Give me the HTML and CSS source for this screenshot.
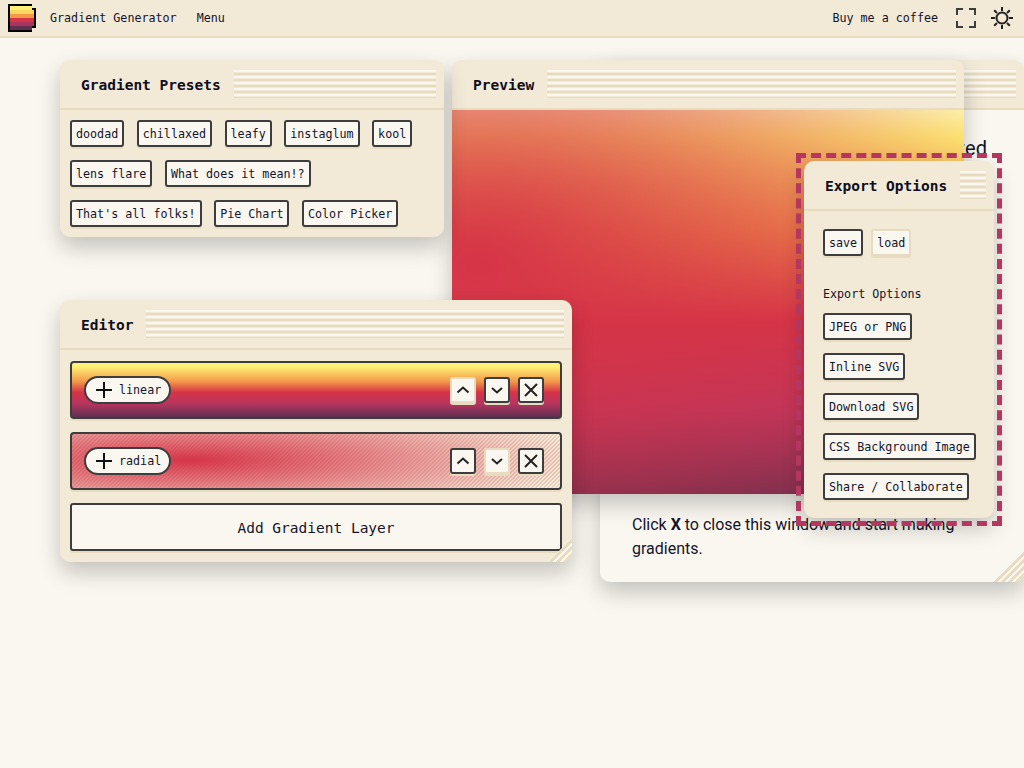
FILE: index.html
```html
<!DOCTYPE html>
<html lang="en">
<head>
    <meta charset="UTF-8">
    <meta name="viewport" content="width=device-width, initial-scale=1.0">
    <title>Gradient Generator</title>
    <link rel="stylesheet" href="styles.css">
</head>
<body>
    <!-- Top Bar -->
    <header class="topbar">
        <svg class="logo" width="28" height="28" viewBox="0 0 28 28" shape-rendering="crispEdges">
            <polygon fill="#000" points="0,0 24,0 24,4 28,4 28,24 24,24 24,28 0,28"/>
            <rect x="2" y="2" width="22" height="4" fill="#fff07a"/>
            <rect x="2" y="6" width="24" height="4" fill="#fad660"/>
            <rect x="2" y="10" width="24" height="4" fill="#f2994a"/>
            <rect x="2" y="14" width="24" height="4" fill="#d63447"/>
            <rect x="2" y="18" width="24" height="4" fill="#a8345f"/>
            <rect x="2" y="22" width="22" height="4" fill="#5e3050"/>
        </svg>
        <span class="brand">Gradient Generator</span>
        <span class="menu">Menu</span>
        <span class="coffee">Buy me a coffee</span>
        <svg class="icon-full" width="20" height="20" viewBox="0 0 20 20" fill="none" stroke="#3d3d3d" stroke-width="2">
            <path d="M1 7V1H7M13 1H19V7M19 13V19H13M7 19H1V13"/>
        </svg>
        <svg class="icon-sun" width="24" height="24" viewBox="0 0 24 24" fill="none" stroke="#222" stroke-width="2">
            <circle cx="12" cy="12" r="5.5"/>
            <path d="M12 1V5M12 19V23M1 12H5M19 12H23M4.2 4.2L7 7M17 17L19.8 19.8M4.2 19.8L7 17M17 7L19.8 4.2"/>
        </svg>
    </header>

    <!-- Welcome Window -->
    <section class="window welcome">
        <div class="titlebar">
            <h2>Welcome</h2>
            <div class="stripes"></div>
        </div>
        <div class="welcome-body">
            <p class="welcome-lead">Now let's get your gradients started</p>
            <p>Click <strong>X</strong> to close this window and start making gradients.</p>
        </div>
        <div class="resize resize-large"></div>
    </section>

    <!-- Preview Window -->
    <section class="window preview">
        <div class="titlebar">
            <h2>Preview</h2>
            <div class="stripes"></div>
        </div>
        <div class="preview-image"></div>
    </section>

    <!-- Presets Window -->
    <section class="window presets">
        <div class="titlebar">
            <h2>Gradient Presets</h2>
            <div class="stripes"></div>
        </div>
        <div class="preset-list">
            <button class="btn">doodad</button>
            <button class="btn">chillaxed</button>
            <button class="btn">leafy</button>
            <button class="btn">instaglum</button>
            <button class="btn">kool</button>
            <button class="btn">lens flare</button>
            <button class="btn">What does it mean!?</button>
            <button class="btn">That's all folks!</button>
            <button class="btn">Pie Chart</button>
            <button class="btn">Color Picker</button>
        </div>
    </section>

    <!-- Editor Window -->
    <section class="window editor">
        <div class="titlebar">
            <h2>Editor</h2>
            <div class="stripes"></div>
        </div>
        <div class="layers">
            <div class="layer layer-linear">
                <button class="pill">
                    <svg width="18" height="18" viewBox="0 0 18 18" stroke="#111" stroke-width="2"><path d="M9 1V17M1 9H17"/></svg>
                    linear
                </button>
                <div class="layer-actions">
                    <button class="square active">
                        <svg width="14" height="14" viewBox="0 0 14 14" fill="none" stroke="#222" stroke-width="2"><path d="M1.5 9.5L7 4.5L12.5 9.5"/></svg>
                    </button>
                    <button class="square">
                        <svg width="14" height="14" viewBox="0 0 14 14" fill="none" stroke="#222" stroke-width="2"><path d="M2 5L7 9.5L12 5"/></svg>
                    </button>
                    <button class="square">
                        <svg width="16" height="16" viewBox="0 0 16 16" fill="none" stroke="#222" stroke-width="2"><path d="M2 2L14 14M14 2L2 14"/></svg>
                    </button>
                </div>
            </div>
            <div class="layer layer-radial">
                <button class="pill">
                    <svg width="18" height="18" viewBox="0 0 18 18" stroke="#111" stroke-width="2"><path d="M9 1V17M1 9H17"/></svg>
                    radial
                </button>
                <div class="layer-actions">
                    <button class="square">
                        <svg width="14" height="14" viewBox="0 0 14 14" fill="none" stroke="#222" stroke-width="2"><path d="M1.5 9.5L7 4.5L12.5 9.5"/></svg>
                    </button>
                    <button class="square active">
                        <svg width="14" height="14" viewBox="0 0 14 14" fill="none" stroke="#222" stroke-width="2"><path d="M2 5L7 9.5L12 5"/></svg>
                    </button>
                    <button class="square">
                        <svg width="16" height="16" viewBox="0 0 16 16" fill="none" stroke="#222" stroke-width="2"><path d="M2 2L14 14M14 2L2 14"/></svg>
                    </button>
                </div>
            </div>
            <button class="add-layer">Add Gradient Layer</button>
        </div>
        <div class="resize"></div>
    </section>

    <!-- Export Window -->
    <section class="window export">
        <div class="titlebar">
            <h2>Export Options</h2>
            <div class="stripes"></div>
        </div>
        <div class="export-body">
            <div class="save-row">
                <button class="btn">save</button>
                <button class="btn active">load</button>
            </div>
            <div class="export-label">Export Options</div>
            <button class="btn">JPEG or PNG</button>
            <button class="btn">Inline SVG</button>
            <button class="btn">Download SVG</button>
            <button class="btn">CSS Background Image</button>
            <button class="btn">Share / Collaborate</button>
        </div>
    </section>
</body>
</html>
```

FILE: styles.css
```css
/* General Reset */
* {
    margin: 0;
    padding: 0;
    box-sizing: border-box;
}

body {
    font-family: "DejaVu Sans Mono", monospace;
    background-color: #faf7f0;
    color: #14142b;
    height: 768px;
    overflow: hidden;
    position: relative;
}

/* Top Bar */
.topbar {
    display: flex;
    align-items: center;
    height: 38px;
    padding: 0 10px 0 8px;
    background-color: #f2e9d7;
    border-bottom: 2px solid #e8dcc0;
    font-size: 11.7px;
}

.logo {
    margin-right: 14px;
}

.brand {
    margin-right: 20px;
}

.coffee {
    margin-left: auto;
    margin-right: 18px;
}

.icon-full {
    margin-right: 14px;
}

/* Windows */
.window {
    position: absolute;
    background-color: #f2e9d7;
    border-radius: 10px;
    box-shadow: 0 10px 22px rgba(0, 0, 0, 0.22);
}

.titlebar {
    display: flex;
    align-items: center;
    height: 50px;
    padding: 2px 8px 0 21px;
    border-bottom: 2px solid #e8dcc0;
}

h2 {
    font-size: 14.5px;
    font-weight: bold;
    white-space: nowrap;
    margin-right: 13px;
    color: #0e0e20;
}

.stripes {
    flex: 1;
    height: 28px;
    margin-bottom: 2px;
    background: repeating-linear-gradient(to bottom, #faf7f0 0, #faf7f0 2px, #f2e9d7 2px, #f2e9d7 3px, #e8dcc0 3px, #e8dcc0 5px, #f2e9d7 5px, #f2e9d7 6px);
}

.welcome {
    left: 600px;
    top: 60px;
    width: 424px;
    height: 522px;
    background-color: #faf7f0;
}

.welcome .titlebar {
    background-color: #f2e9d7;
    border-radius: 10px 10px 0 0;
}

.welcome-body {
    display: flex;
    flex-direction: column;
    justify-content: space-between;
    height: 472px;
    padding: 24px 32px 21px;
    font-family: Roboto, sans-serif;
    font-size: 16px;
    line-height: 24px;
}

.welcome-lead {
    font-size: 20px;
    line-height: 28px;
    text-align: right;
    margin-right: 5px;
}

.preview {
    left: 452px;
    top: 60px;
    width: 512px;
    height: 434px;
}

.preview-image {
    height: 384px;
    background:
        radial-gradient(ellipse 640px 420px at 5% 40%, #d63447 0, rgba(214, 52, 71, 0) 90%),
        linear-gradient(to bottom, #fffbb0 0, #fff275 7%, #f2994a 32%, #d63447 55%, #b83560 78%, #6f2f50 100%);
}

.presets {
    left: 60px;
    top: 60px;
    width: 384px;
    height: 177px;
}

.preset-list {
    display: flex;
    flex-wrap: wrap;
    gap: 13px 12.5px;
    padding: 10px;
}

.editor {
    left: 60px;
    top: 300px;
    width: 512px;
    height: 262px;
}

.layers {
    display: flex;
    flex-direction: column;
    padding: 11px 10px 0;
}

.layer {
    display: flex;
    align-items: center;
    justify-content: space-between;
    height: 58px;
    padding: 0 16px 0 12px;
    border: 2px solid #3d3d3d;
    border-radius: 4px;
    box-shadow: 0 2px 0 #e8dcc0;
    margin-bottom: 13px;
}

.layer-linear {
    background: linear-gradient(to bottom, #fff275 0, #fff275 6%, #f2994a 34%, #d63447 54%, #b83560 75%, #5e3050 100%);
}

.layer-radial {
    background:
        radial-gradient(ellipse 420px 60px at 24% 48%, #d63447 0, rgba(214, 52, 71, 0.55) 45%, rgba(214, 52, 71, 0) 100%),
        linear-gradient(135deg, #e5d5b5 25%, #faf7f0 25%, #faf7f0 50%, #e5d5b5 50%, #e5d5b5 75%, #faf7f0 75%) 0 0 / 4px 4px;
}

.layer-actions {
    display: flex;
    gap: 8px;
}

/* Buttons */
button {
    font-family: inherit;
    color: inherit;
    background-color: #faf7f0;
    border: 2px solid #3d3d3d;
    border-radius: 3px;
    box-shadow: 0 2px 0 #e8dcc0;
}

.btn {
    height: 27px;
    padding: 0 4px;
    font-size: 11.7px;
    white-space: nowrap;
}

.active {
    border-color: #e8dcc0;
}

.pill {
    display: flex;
    align-items: center;
    gap: 6px;
    width: 87px;
    height: 28px;
    padding-left: 9px;
    border-radius: 14px;
    font-size: 11.7px;
    box-shadow: none;
}

.square {
    display: flex;
    align-items: center;
    justify-content: center;
    width: 26px;
    height: 26px;
}

.add-layer {
    height: 48px;
    padding-top: 1px;
    font-size: 14.5px;
}

/* Corner Handle */
.resize {
    position: absolute;
    right: 0;
    bottom: 0;
    width: 24px;
    height: 24px;
    border-bottom-right-radius: 10px;
    clip-path: polygon(100% 0, 100% 100%, 0 100%);
    background: repeating-linear-gradient(135deg, #faf7f0 0, #faf7f0 2px, #e8dcc0 2px, #e8dcc0 5px);
}

.resize-large {
    width: 31px;
    height: 31px;
}

/* Export Window */
.export {
    left: 804px;
    top: 161px;
    width: 190px;
    height: 357px;
}

/* square dashed frame, the window's own outline would follow its radius */
.export::before {
    content: "";
    position: absolute;
    inset: 0;
    outline: 5px dashed #b5365f;
    outline-offset: 3px;
    pointer-events: none;
}

.export-body {
    display: flex;
    flex-direction: column;
    align-items: flex-start;
    gap: 13px;
    padding: 18px 19px 0;
}

.save-row {
    display: flex;
    gap: 8px;
}

.export-label {
    font-size: 11.7px;
    margin-top: 17px;
    margin-bottom: -2px;
    line-height: 16px;
}
```
